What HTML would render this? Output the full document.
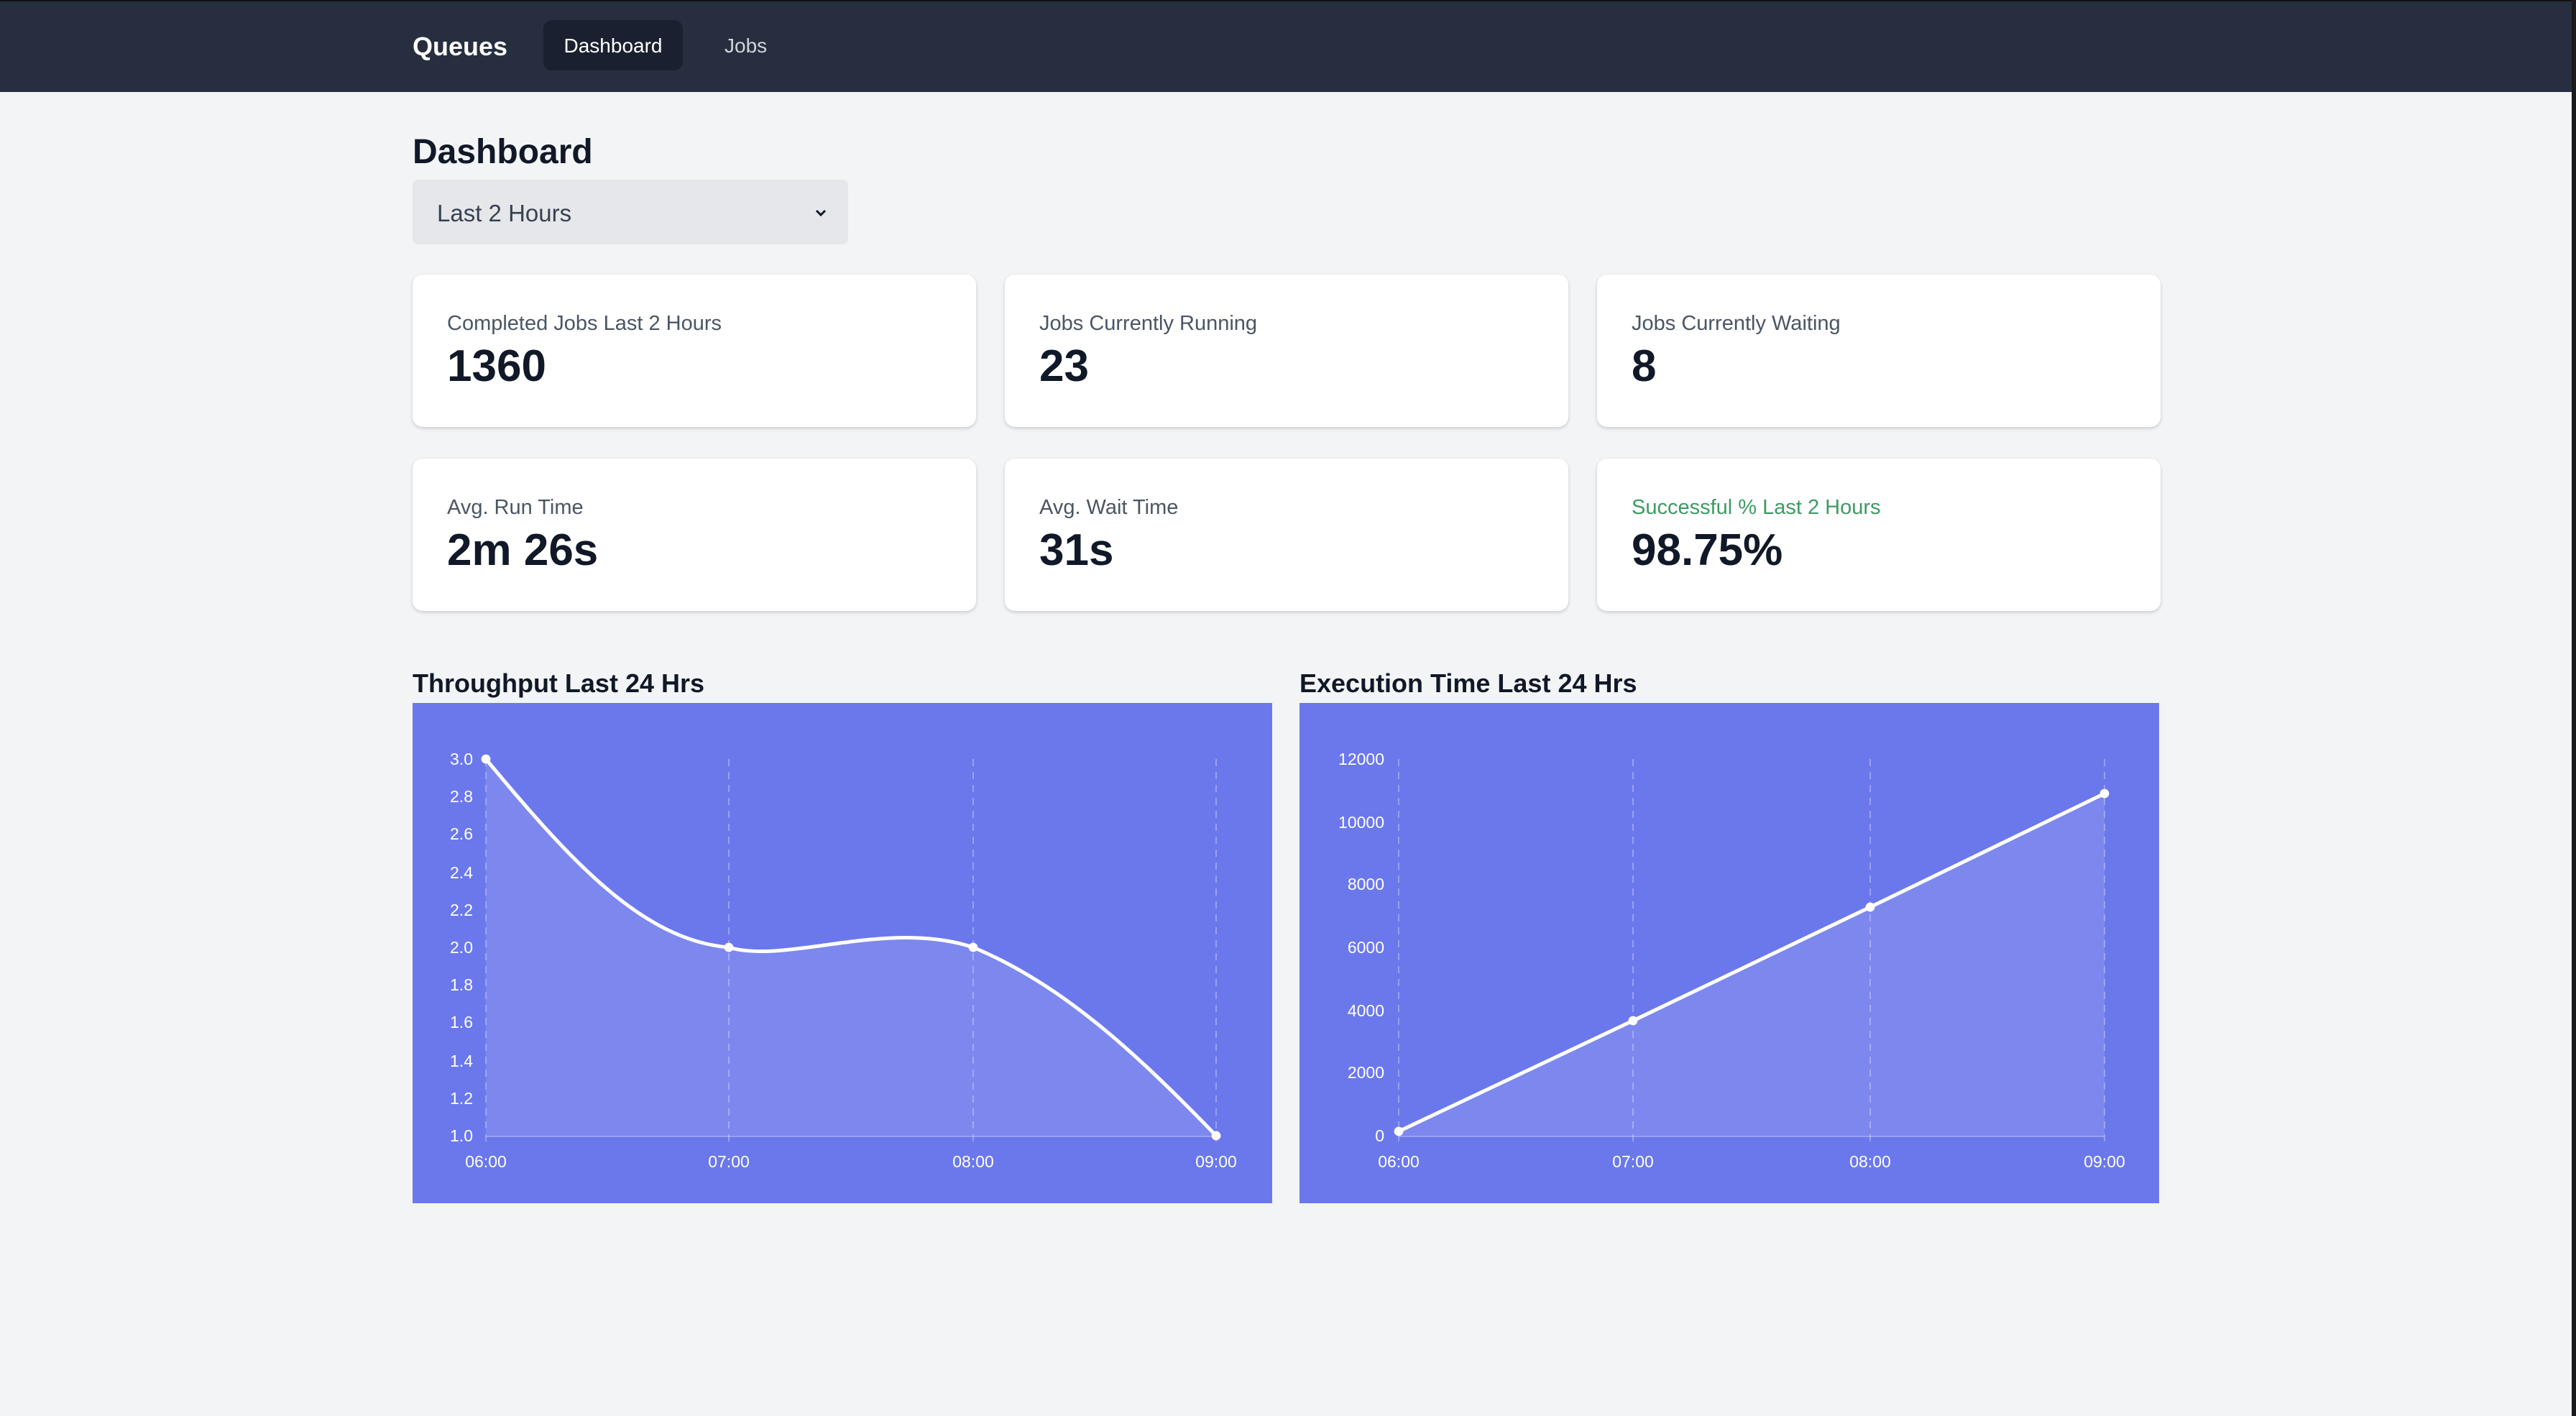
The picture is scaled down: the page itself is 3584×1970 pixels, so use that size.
<!DOCTYPE html>
<html><head><meta charset="utf-8"><style>
html{zoom:2}
*{margin:0;padding:0;box-sizing:border-box}
body{width:1792px;height:985px;background:#f3f4f6;font-family:"Liberation Sans",sans-serif;position:relative;overflow:hidden;color:#111827}
.a{position:absolute}
.nav{left:0;top:0;width:1792px;height:64px;background:#272e3f;border-top:1px solid #111}
.rb{right:0;top:0;width:3px;height:985px;background:#1b1b1b}
.card{background:#fff;border-radius:7px;box-shadow:0 1px 3px rgba(0,0,0,.12),0 1px 2px rgba(0,0,0,.06);width:392px;height:106px}
.lab{position:absolute;left:24px;top:26px;font-size:14.5px;color:#4b5563}
.val{position:absolute;left:24px;top:46px;font-size:31px;font-weight:bold;color:#111827}
.ct{font-size:18px;font-weight:bold;color:#111827}
.chart{background:#6b78ec;width:598px;height:348px}
svg text{font-family:"Liberation Sans",sans-serif;font-size:11.5px;fill:#fff}
</style></head><body>
<div class="a nav"></div>
<div class="a" style="left:287px;top:22px;font-size:18px;font-weight:bold;color:#fff">Queues</div>
<div class="a" style="left:378px;top:14px;width:97px;height:35px;background:#1a2030;border-radius:6px;color:#fff;font-size:14px;line-height:36px;text-align:center">Dashboard</div>
<div class="a" style="left:504px;top:24px;font-size:14px;color:#d1d5db">Jobs</div>
<div class="a rb"></div>

<div class="a" style="left:287px;top:92px;font-size:24px;font-weight:bold">Dashboard</div>
<div class="a" style="left:287px;top:125px;width:303px;height:45px;background:#e5e7eb;border-radius:4px">
<div class="a" style="left:17px;top:14px;font-size:16.5px;color:#374151">Last 2 Hours</div>
<svg class="a" style="left:279px;top:19px" width="10" height="8" viewBox="0 0 10 8"><path d="M2 2.5 L5 5.5 L8 2.5" stroke="#111827" stroke-width="1.5" fill="none"/></svg>
</div>

<div class="a card" style="left:287px;top:191px"><div class="lab">Completed Jobs Last 2 Hours</div><div class="val">1360</div></div>
<div class="a card" style="left:699px;top:191px"><div class="lab">Jobs Currently Running</div><div class="val">23</div></div>
<div class="a card" style="left:1111px;top:191px"><div class="lab">Jobs Currently Waiting</div><div class="val">8</div></div>
<div class="a card" style="left:287px;top:319px"><div class="lab">Avg. Run Time</div><div class="val">2m 26s</div></div>
<div class="a card" style="left:699px;top:319px"><div class="lab">Avg. Wait Time</div><div class="val">31s</div></div>
<div class="a card" style="left:1111px;top:319px"><div class="lab" style="color:#3d9a64">Successful % Last 2 Hours</div><div class="val">98.75%</div></div>

<div class="a ct" style="left:287px;top:465px">Throughput Last 24 Hrs</div>
<div class="a ct" style="left:904px;top:465px">Execution Time Last 24 Hrs</div>

<svg class="a chart" style="left:287px;top:489px" width="598" height="348">
<g stroke="rgba(255,255,255,.3)" stroke-dasharray="5 4" stroke-width="1"><line x1="51" y1="39" x2="51" y2="306"/><line x1="220" y1="39" x2="220" y2="306"/><line x1="390" y1="39" x2="390" y2="306"/><line x1="559" y1="39" x2="559" y2="306"/></g>
<line x1="51" y1="301.5" x2="559" y2="301.5" stroke="rgba(255,255,255,.3)"/>
<path d="M51,39 C110,110 160,165 220,170 C260,182 330,150 390,170 C450,195 500,240 559,301 L51,301 Z" fill="rgba(255,255,255,.12)"/>
<path d="M51,39 C110,110 160,165 220,170 C260,182 330,150 390,170 C450,195 500,240 559,301" fill="none" stroke="#fff" stroke-width="2.5"/>
<g fill="#fff"><circle cx="51" cy="39" r="3.2"/><circle cx="220" cy="170" r="3.2"/><circle cx="390" cy="170" r="3.2"/><circle cx="559" cy="301" r="3.2"/></g>
<g text-anchor="end"><text x="42" y="43">3.0</text><text x="42" y="69">2.8</text><text x="42" y="95">2.6</text><text x="42" y="122">2.4</text><text x="42" y="148">2.2</text><text x="42" y="174">2.0</text><text x="42" y="200">1.8</text><text x="42" y="226">1.6</text><text x="42" y="253">1.4</text><text x="42" y="279">1.2</text><text x="42" y="305">1.0</text></g>
<g text-anchor="middle"><text x="51" y="323">06:00</text><text x="220" y="323">07:00</text><text x="390" y="323">08:00</text><text x="559" y="323">09:00</text></g>
</svg>

<svg class="a chart" style="left:904px;top:489px" width="598" height="348">
<g stroke="rgba(255,255,255,.3)" stroke-dasharray="5 4" stroke-width="1"><line x1="69" y1="39" x2="69" y2="306"/><line x1="232" y1="39" x2="232" y2="306"/><line x1="397" y1="39" x2="397" y2="306"/><line x1="560" y1="39" x2="560" y2="306"/></g>
<line x1="69" y1="301.5" x2="560" y2="301.5" stroke="rgba(255,255,255,.3)"/>
<path d="M69,298 L232,221 L397,142 L560,63 L560,301 L69,301 Z" fill="rgba(255,255,255,.12)"/>
<path d="M69,298 L232,221 L397,142 L560,63" fill="none" stroke="#fff" stroke-width="2.5"/>
<g fill="#fff"><circle cx="69" cy="298" r="3.2"/><circle cx="232" cy="221" r="3.2"/><circle cx="397" cy="142" r="3.2"/><circle cx="560" cy="63" r="3.2"/></g>
<g text-anchor="end"><text x="59" y="43">12000</text><text x="59" y="87">10000</text><text x="59" y="130">8000</text><text x="59" y="174">6000</text><text x="59" y="218">4000</text><text x="59" y="261">2000</text><text x="59" y="305">0</text></g>
<g text-anchor="middle"><text x="69" y="323">06:00</text><text x="232" y="323">07:00</text><text x="397" y="323">08:00</text><text x="560" y="323">09:00</text></g>
</svg>
</body></html>
